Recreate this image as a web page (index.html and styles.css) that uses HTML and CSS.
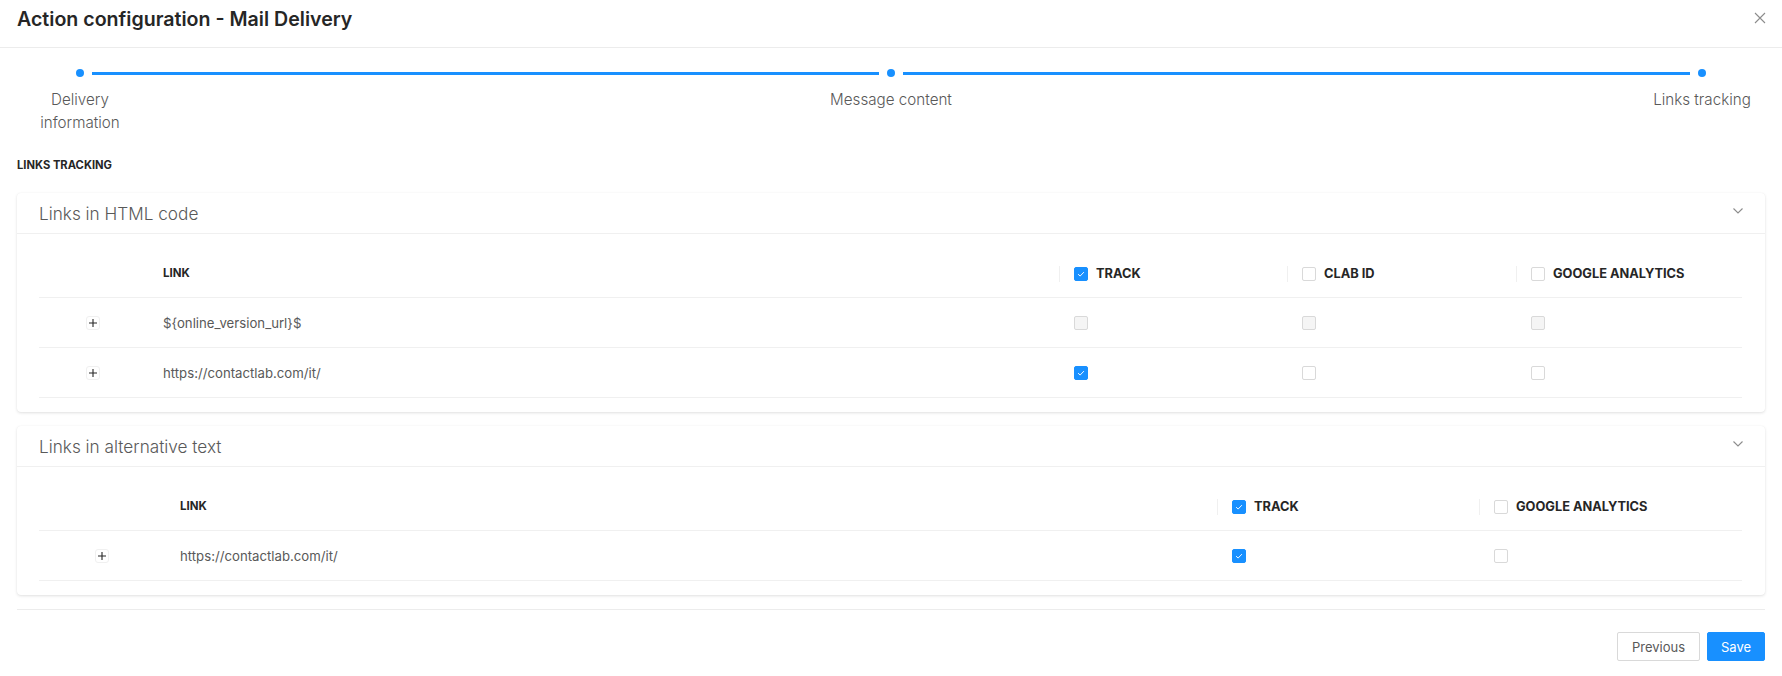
FILE: index.html
```html
<!DOCTYPE html>
<html lang="en">
<head>
<meta charset="utf-8">
<title>Action configuration - Mail Delivery</title>
<link rel="stylesheet" href="styles.css">
</head>
<body>
<div class="modal">
  <div class="modal-header">
    <h1 class="modal-title">Action configuration - Mail Delivery</h1>
    <button class="close" aria-label="Close">
      <svg width="12" height="12" viewBox="0 0 12 12"><path d="M1 1L11 11M11 1L1 11" stroke="#8c8c8c" stroke-width="1.1" fill="none"/></svg>
    </button>
  </div>

  <div class="modal-body">
    <div class="steps">
      <div class="step"><span class="dot"></span><span class="step-label">Delivery information</span></div>
      <div class="step-line"></div>
      <div class="step"><span class="dot"></span><span class="step-label">Message content</span></div>
      <div class="step-line"></div>
      <div class="step"><span class="dot"></span><span class="step-label">Links tracking</span></div>
    </div>

    <div class="section-title">LINKS TRACKING</div>

    <div class="card">
      <div class="card-head">
        <span class="card-title">Links in HTML code</span>
        <svg class="chev" width="10" height="6" viewBox="0 0 10 6"><path d="M0.5 0.5L5 5L9.5 0.5" stroke="#8c8c8c" stroke-width="1.1" fill="none"/></svg>
      </div>
      <div class="card-body">
        <div class="tr head grid-html">
          <div class="td"></div>
          <div class="td th-link">LINK</div>
          <div class="td th-check"><span class="divider"></span><span class="cb checked"><svg width="14" height="14" viewBox="0 0 14 14"><path d="M3.6 7.2L6 9.4L10.4 4.8" stroke="#fff" stroke-width="1.1" fill="none"/></svg></span><span class="th-text">TRACK</span></div>
          <div class="td th-check"><span class="divider"></span><span class="cb"></span><span class="th-text">CLAB ID</span></div>
          <div class="td th-check"><span class="divider"></span><span class="cb"></span><span class="th-text">GOOGLE ANALYTICS</span></div>
        </div>
        <div class="tr grid-html">
          <div class="td expand"><span class="plus"><svg width="14" height="14" viewBox="0 0 14 14"><path d="M7 3V11M3 7H11" stroke="#262626" stroke-width="1.1" fill="none"/></svg></span></div>
          <div class="td link">${online_version_url}$</div>
          <div class="td check"><span class="cb disabled"></span></div>
          <div class="td check"><span class="cb disabled"></span></div>
          <div class="td check"><span class="cb disabled"></span></div>
        </div>
        <div class="tr grid-html">
          <div class="td expand"><span class="plus"><svg width="14" height="14" viewBox="0 0 14 14"><path d="M7 3V11M3 7H11" stroke="#262626" stroke-width="1.1" fill="none"/></svg></span></div>
          <div class="td link">https://contactlab.com/it/</div>
          <div class="td check"><span class="cb checked"><svg width="14" height="14" viewBox="0 0 14 14"><path d="M3.6 7.2L6 9.4L10.4 4.8" stroke="#fff" stroke-width="1.1" fill="none"/></svg></span></div>
          <div class="td check"><span class="cb"></span></div>
          <div class="td check"><span class="cb"></span></div>
        </div>
      </div>
    </div>

    <div class="card">
      <div class="card-head">
        <span class="card-title">Links in alternative text</span>
        <svg class="chev" width="10" height="6" viewBox="0 0 10 6"><path d="M0.5 0.5L5 5L9.5 0.5" stroke="#8c8c8c" stroke-width="1.1" fill="none"/></svg>
      </div>
      <div class="card-body">
        <div class="tr head grid-alt">
          <div class="td"></div>
          <div class="td th-link">LINK</div>
          <div class="td th-check"><span class="divider"></span><span class="cb checked"><svg width="14" height="14" viewBox="0 0 14 14"><path d="M3.6 7.2L6 9.4L10.4 4.8" stroke="#fff" stroke-width="1.1" fill="none"/></svg></span><span class="th-text">TRACK</span></div>
          <div class="td th-check"><span class="divider"></span><span class="cb"></span><span class="th-text">GOOGLE ANALYTICS</span></div>
        </div>
        <div class="tr grid-alt">
          <div class="td expand"><span class="plus"><svg width="14" height="14" viewBox="0 0 14 14"><path d="M7 3V11M3 7H11" stroke="#262626" stroke-width="1.1" fill="none"/></svg></span></div>
          <div class="td link">https://contactlab.com/it/</div>
          <div class="td check"><span class="cb checked"><svg width="14" height="14" viewBox="0 0 14 14"><path d="M3.6 7.2L6 9.4L10.4 4.8" stroke="#fff" stroke-width="1.1" fill="none"/></svg></span></div>
          <div class="td check"><span class="cb"></span></div>
        </div>
      </div>
    </div>
  </div>

  <div class="modal-footer">
    <button class="btn btn-default">Previous</button>
    <button class="btn btn-primary">Save</button>
  </div>
</div>
</body>
</html>
```

FILE: styles.css
```css
* { box-sizing: border-box; }
html, body { margin: 0; padding: 0; background: #fff; }
body {
  font-family: Inter, "Noto Sans", sans-serif;
  color: #595959;
}
.modal { width: 1782px; height: 676px; background: #fff; }

.modal-header {
  height: 48px;
  border-bottom: 1px solid #ececec;
  display: flex;
  justify-content: space-between;
  align-items: flex-start;
  padding: 0 15px 0 17px;
}
.modal-title {
  margin: 7px 0 0;
  font-size: 19.6px;
  line-height: 24px;
  font-weight: 600;
  color: #262626;
  letter-spacing: 0;
}
.close {
  margin-top: 11px;
  width: 14px; height: 14px;
  padding: 0; border: 0; background: transparent;
  display: flex; align-items: center; justify-content: center;
}

.modal-body { padding: 0 17px; }

.steps {
  display: flex;
  align-items: flex-start;
  padding-top: 21px;
}
.step {
  width: 126px;
  flex: none;
  display: flex;
  flex-direction: column;
  align-items: center;
  position: relative;
  z-index: 1;
}
.dot { width: 8px; height: 8px; border-radius: 50%; background: #1890ff; }
.step-label {
  margin-top: 11px;
  font-size: 15.2px;
  line-height: 23px;
  font-weight: 300;
  color: #595959;
  text-align: center;
}
.step-line {
  flex: 1;
  height: 3px;
  background: #1890ff;
  margin: 2.5px -51px 0;
}

.section-title {
  margin-top: 24px;
  font-size: 11.2px;
  line-height: 14px;
  font-weight: 700;
  color: #262626;
}

.card {
  margin-top: 21px;
  background: #fff;
  border-radius: 4px;
  box-shadow: 0 1px 3px rgba(0,0,0,0.12), 0 0 1px rgba(0,0,0,0.06);
}
.card + .card { margin-top: 14px; }
.card-head {
  height: 41px;
  border-bottom: 1px solid #f0f0f0;
  display: flex;
  align-items: center;
  justify-content: space-between;
  padding: 0 22px;
}
.card-title { font-size: 17.2px; font-weight: 300; color: #595959; }
.chev { margin-top: -4px; }

.card-body { padding: 16px 23px 14px 22px; }

.tr { display: grid; border-bottom: 1px solid #f0f0f0; height: 50px; }
.tr.head { height: 48px; }
.grid-html { grid-template-columns: 108px 1fr 228px 229px 226px; }
.grid-alt { grid-template-columns: 125px 1fr 262px 263px; }

.td { display: flex; align-items: center; min-width: 0; }
.th-link { padding-left: 16px; padding-bottom: 2px; font-size: 11.5px; font-weight: 700; color: #262626; }
.divider { width: 1px; height: 16px; background: #f0f0f0; margin-right: 14px; }
.th-text { margin-left: 8px; font-size: 12.8px; font-weight: 700; color: #262626; }
.expand { justify-content: center; }
.link { padding-left: 16px; font-size: 13.2px; color: #595959; }
.check { padding-left: 15px; }

.plus {
  width: 14px; height: 14px;
  border: 1px solid #f0f0f0;
  border-radius: 3px;
  display: flex; align-items: center; justify-content: center;
}
.plus svg { flex: none; }

.cb {
  width: 14px; height: 14px;
  border: 1px solid #d9d9d9;
  border-radius: 2px;
  background: #fff;
  display: flex; align-items: center; justify-content: center;
  flex: none;
  overflow: hidden;
}
.cb.checked { background: #1890ff; border-color: #1890ff; }
.cb.disabled { background: #f5f5f5; border-color: #d9d9d9; }

.modal-footer {
  margin: 14px 17px 0;
  border-top: 1px solid #ececec;
  padding-top: 22px;
  display: flex;
  justify-content: flex-end;
  gap: 7px;
}
.btn {
  height: 29px;
  border-radius: 2px;
  font-family: Inter, "Noto Sans", sans-serif;
  font-size: 13px;
  padding: 0 10px;
  cursor: pointer;
}
.btn-default { width: 83px; background: #fff; border: 1px solid #d9d9d9; color: #595959; }
.btn-primary { width: 58px; background: #1890ff; border: 1px solid #1890ff; color: #fff; }
```
